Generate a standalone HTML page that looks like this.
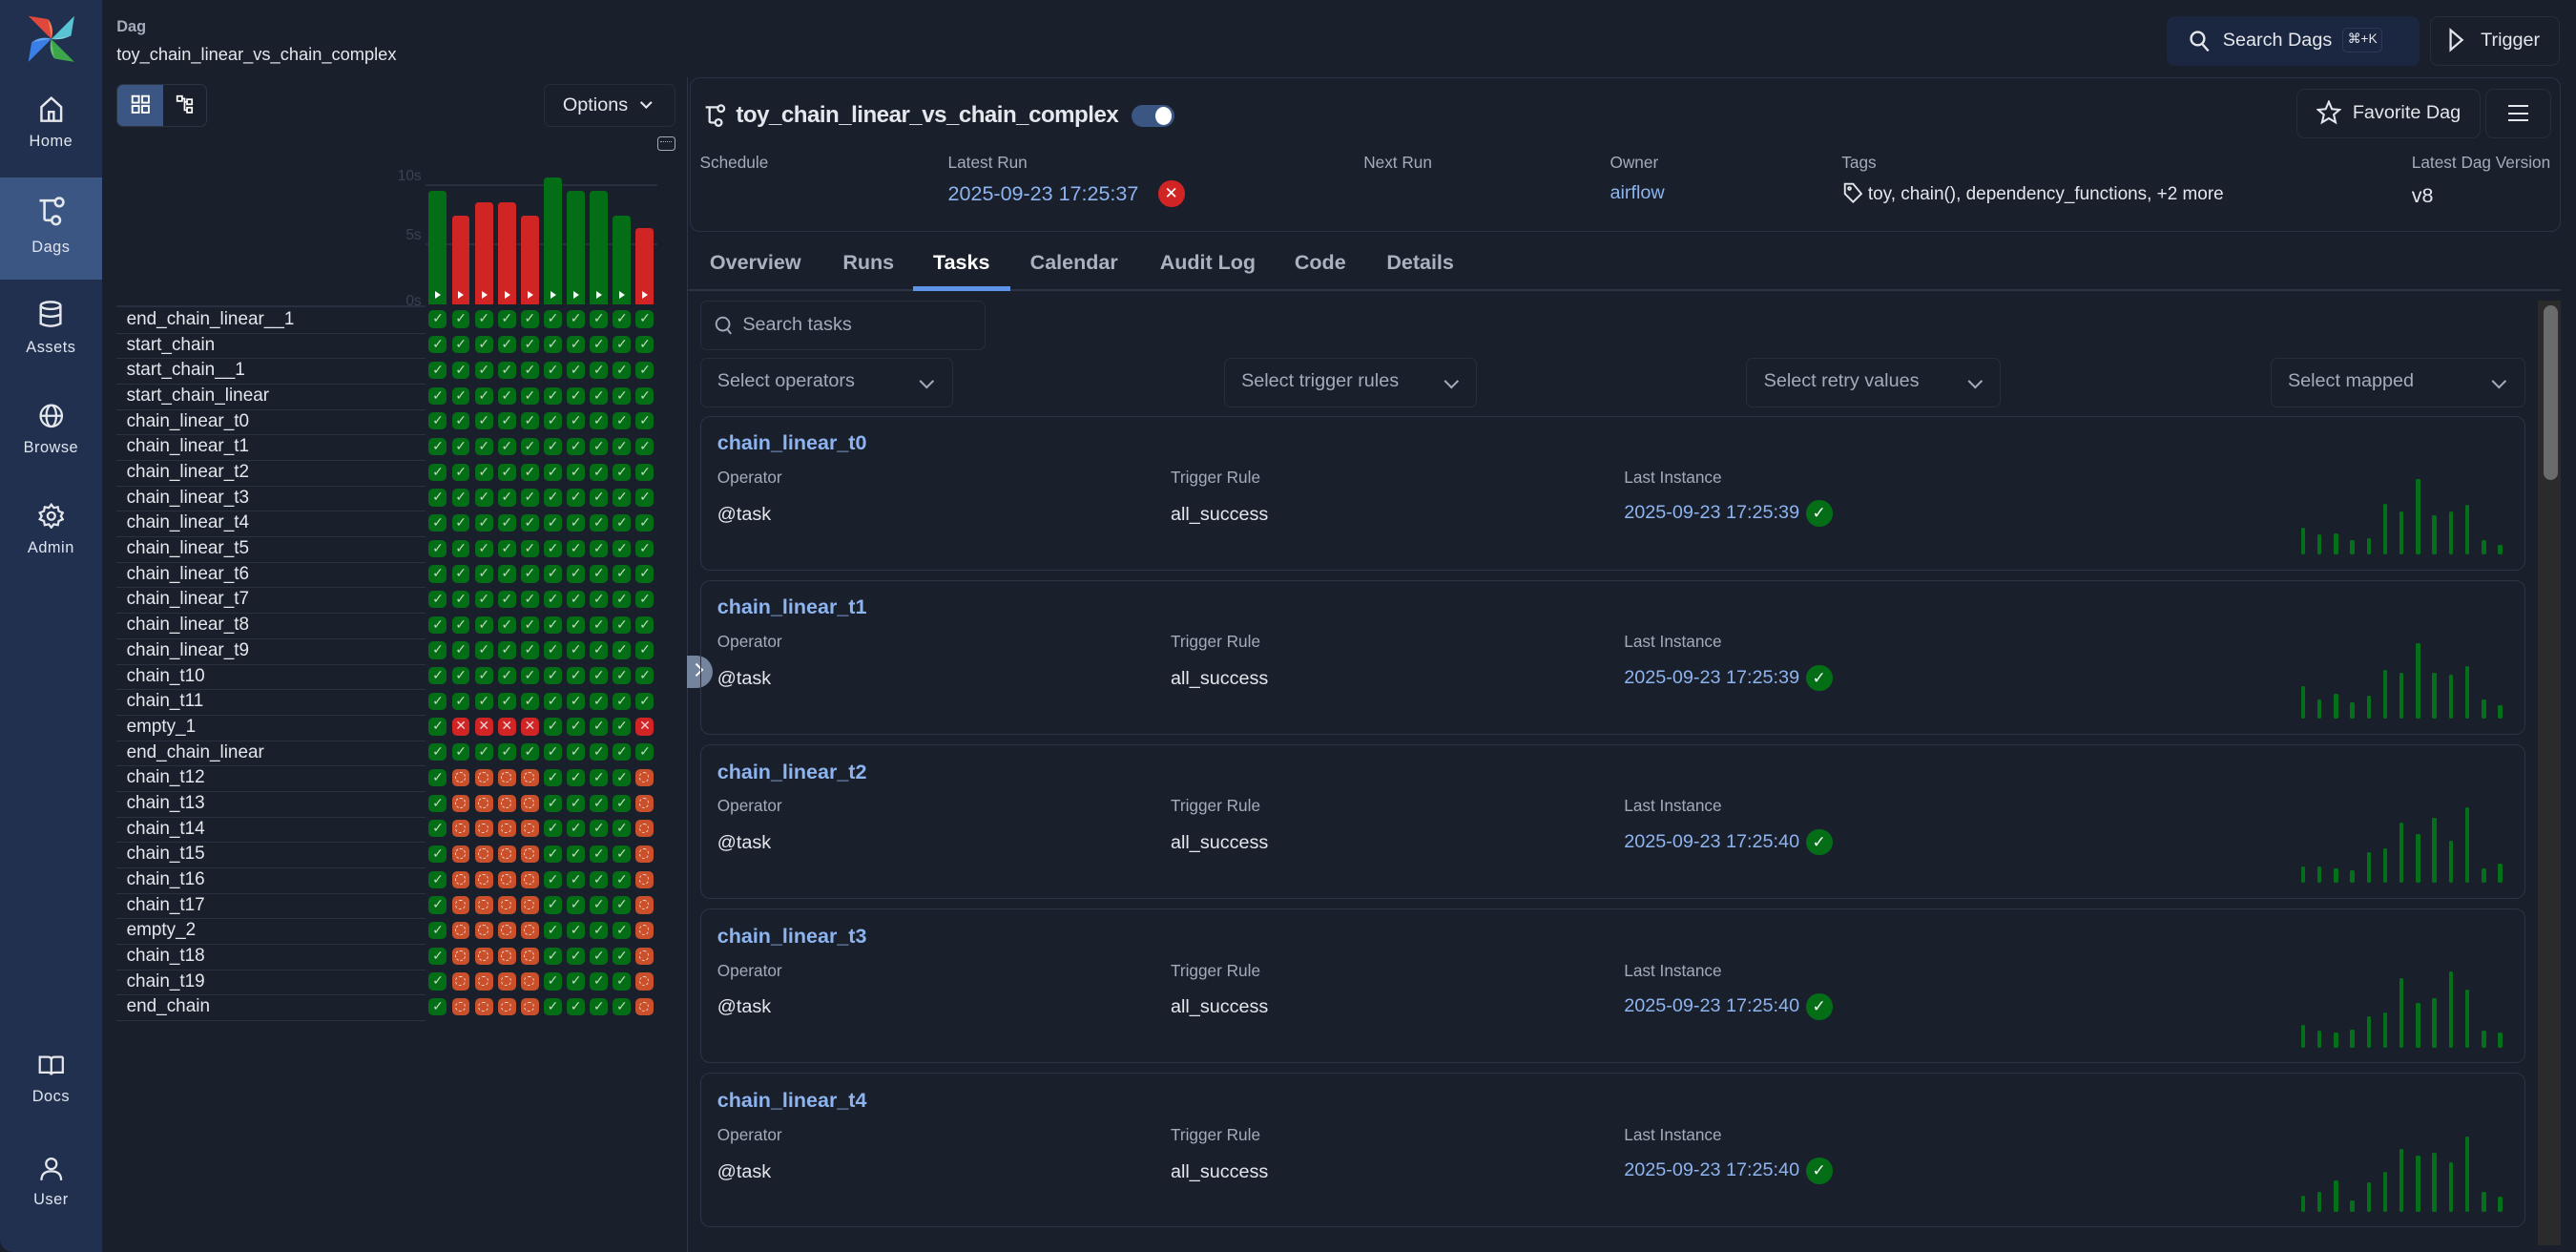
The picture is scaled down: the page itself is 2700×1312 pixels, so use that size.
<!DOCTYPE html>
<html><head><meta charset="utf-8">
<style>
*{box-sizing:border-box;margin:0;padding:0}
html,body{width:2700px;height:1312px;overflow:hidden;background:#1a1f2c}
#w{position:relative;width:1568px;height:762px;zoom:1.72194;background:#1a1f2c;font-family:"Liberation Sans",sans-serif;color:#e4e7ec;overflow:hidden}
.a{position:absolute}
.side{left:0;top:0;width:62px;height:762px;background:#22304f;border-radius:0 0 0 8px}
.nav{position:absolute;left:0;width:62px;text-align:center;font-size:9.5px;color:#dfe5ef;letter-spacing:.3px}
.nav svg{display:block;margin:0 auto 6px}
.lbl{font-size:10px;color:#a3acba}
.row{position:absolute;left:71px;width:188px;height:15.5px;border-bottom:1px solid #2a3141;font-size:11px;padding-left:6px;line-height:14px;color:#e4e7ec}
.cells{position:absolute;left:261px;height:11px}
.cells span{position:absolute;top:0;width:11px;height:10.6px;border-radius:3px;font-size:8px;line-height:10.6px;text-align:center;color:#b8dcb9}
.g{background:#046e16}
.r{background:#d12424}
.o{background:#c9502a}
.g::after{content:"✓"}
.r::after{content:"✕";color:#f5d0d0}
.o::after{content:"";position:absolute;left:2px;top:2px;width:5px;height:5px;border:1px dashed #f3d0c4;border-radius:50%}
.bar{position:absolute;width:11px;bottom:0;border-radius:2px 2px 0 0}
.bar::after{content:"";position:absolute;left:4px;bottom:3px;border-left:4px solid #fff;border-top:2.5px solid transparent;border-bottom:2.5px solid transparent}
.box{position:absolute;border:1px solid #2c3445;border-radius:6px}
.sel{position:absolute;top:218px;height:30px;border:1px solid #262e3d;border-radius:4px;font-size:11.5px;color:#a3acba;padding:7px 10px}
.sel::after{content:"";position:absolute;right:12px;top:10px;width:5px;height:5px;border-right:1.3px solid #a3acba;border-bottom:1.3px solid #a3acba;transform:rotate(45deg)}
.card{position:absolute;left:426px;width:1111px;height:94px;border:1px solid #2c3445;border-radius:6px}
.card .t{position:absolute;left:10px;top:9px;font-size:12.5px;font-weight:bold;color:#8db4ef}
.card .l{position:absolute;top:31px;font-size:10px;color:#a3acba}
.card .v{position:absolute;top:53px;font-size:11.5px}
.ok{display:inline-block;width:16px;height:16px;border-radius:50%;background:#046e16;color:#fff;font-size:10px;text-align:center;line-height:16px;vertical-align:middle;margin-left:4px}
.sp{position:absolute;left:974px;bottom:9px;height:50px;width:130px}
.sp i{position:absolute;bottom:0;width:2.6px;background:#05701a;border-radius:1px}
.tab{position:absolute;top:153px;font-size:12.5px;color:#aab2c0;font-weight:bold}
</style></head><body><div id="w">

<div class="a side"></div>
<svg class="a" style="left:16px;top:9px" width="30" height="30" viewBox="0 0 30 30">
<path d="M15 15 L1 1 L13 3 Z" fill="#e1473a"/><path d="M15 15 L13 3 Q17 8 15 15" fill="#f47d59"/>
<path d="M15 15 L29 1 L27 13 Z" fill="#57c5d2"/><path d="M15 15 L27 13 Q21 16 15 15" fill="#7fd8e2"/>
<path d="M15 15 L29 29 L17 27 Z" fill="#3da64a"/><path d="M15 15 L17 27 Q13 22 15 15" fill="#5dc46a"/>
<path d="M15 15 L1 29 L3 17 Z" fill="#3a7ee8"/><path d="M15 15 L3 17 Q9 13 15 15" fill="#62a8f4"/>
</svg>
<div class="a" style="left:0;top:108px;width:62px;height:62px;background:#3c5684"></div>
<div class="nav" style="top:58px"><svg width="16" height="17" viewBox="0 0 16 17" fill="none" stroke="#e4e7ec" stroke-width="1.4"><path d="M2 7 L8 1.5 L14 7 V15.5 H2 Z"/><path d="M6.5 15.5 V10 H9.5 V15.5"/></svg>Home</div>
<div class="nav" style="top:119px"><svg width="18" height="20" viewBox="0 0 18 20" fill="none" stroke="#e4e7ec" stroke-width="1.5"><path d="M2 3 H12 M5 3 V14 Q5 15 7 15 H9"/><circle cx="14" cy="4" r="2.5"/><circle cx="12" cy="15" r="2.5"/></svg>Dags</div>
<div class="nav" style="top:183px"><svg width="14" height="17" viewBox="0 0 14 17" fill="none" stroke="#e4e7ec" stroke-width="1.4"><ellipse cx="7" cy="3" rx="6" ry="2.2"/><path d="M1 3 V14 Q7 17 13 14 V3 M1 8.5 Q7 11 13 8.5"/></svg>Assets</div>
<div class="nav" style="top:245px"><svg width="16" height="16" viewBox="0 0 16 16" fill="none" stroke="#e4e7ec" stroke-width="1.3"><circle cx="8" cy="8" r="6.5"/><ellipse cx="8" cy="8" rx="3" ry="6.5"/><path d="M1.5 8 H14.5"/></svg>Browse</div>
<div class="nav" style="top:306px"><svg width="16" height="16" viewBox="0 0 16 16" fill="none" stroke="#e4e7ec" stroke-width="1.3"><path d="M8 1 L9.5 3 L12 2.5 L12.5 5 L15 6 L13.8 8 L15 10 L12.5 11 L12 13.5 L9.5 13 L8 15 L6.5 13 L4 13.5 L3.5 11 L1 10 L2.2 8 L1 6 L3.5 5 L4 2.5 L6.5 3 Z"/><circle cx="8" cy="8" r="2.3"/></svg>Admin</div>
<div class="nav" style="top:642px"><svg width="16" height="14" viewBox="0 0 16 14" fill="none" stroke="#e4e7ec" stroke-width="1.3"><path d="M1 1.5 H6 Q8 1.5 8 3.5 V12.5 Q8 11 6 11 H1 Z M15 1.5 H10 Q8 1.5 8 3.5 M8 12.5 Q8 11 10 11 H15 V1.5"/></svg>Docs</div>
<div class="nav" style="top:703px"><svg width="16" height="16" viewBox="0 0 16 16" fill="none" stroke="#e4e7ec" stroke-width="1.3"><circle cx="8" cy="5" r="3.2"/><path d="M2 15 Q2 9.5 8 9.5 Q14 9.5 14 15"/></svg>User</div>

<div class="a" style="left:71px;top:11px;font-size:9.5px;font-weight:bold;color:#a3acba">Dag</div>
<div class="a" style="left:71px;top:27px;font-size:10.6px">toy_chain_linear_vs_chain_complex</div>
<div class="a" style="left:71px;top:51px;width:55px;height:26px;border:1px solid #2c3445;border-radius:4px;overflow:hidden">
 <div class="a" style="left:0;top:0;width:28px;height:26px;background:#3c5684"></div>
 <svg class="a" style="left:8px;top:6px" width="12" height="12" viewBox="0 0 12 12" fill="none" stroke="#fff" stroke-width="1.1"><rect x="1" y="1" width="4" height="4"/><rect x="7" y="1" width="4" height="4"/><rect x="1" y="7" width="4" height="4"/><rect x="7" y="7" width="4" height="4"/></svg>
 <svg class="a" style="left:35px;top:6px" width="12" height="12" viewBox="0 0 12 12" fill="none" stroke="#fff" stroke-width="1"><rect x="1" y="1" width="3" height="3"/><rect x="7" y="3" width="3" height="3"/><rect x="7" y="8" width="3" height="3"/><path d="M4 2.5 H5.5 V9.5 H7 M5.5 4.5 H7"/></svg>
</div>
<div class="a" style="left:331px;top:51px;width:80px;height:26px;border:1px solid #262e3d;border-radius:4px;font-size:11.5px;padding:6px 0 0 11px">Options</div>
<div class="a" style="left:391px;top:60px;width:5px;height:5px;border-right:1.2px solid #e4e7ec;border-bottom:1.2px solid #e4e7ec;transform:rotate(45deg)"></div>
<div class="a" style="left:400px;top:83px;width:11px;height:9px;border:1px solid #a3acba;border-radius:2px"></div>
<div class="a" style="left:402px;top:86px;width:7px;height:1px;border-top:1px dotted #a3acba"></div>
<div class="a" style="left:242px;top:102px;font-size:9px;color:#3a4253">10s</div>
<div class="a" style="left:247px;top:138px;font-size:9px;color:#3a4253">5s</div>
<div class="a" style="left:247px;top:178px;font-size:9px;color:#3a4253">0s</div>
<div class="a" style="left:259px;top:112px;width:141px;height:1px;background:#283040"></div>
<div class="a" style="left:259px;top:148px;width:141px;height:1px;background:#283040"></div>
<div class="a" style="left:71px;top:186px;width:188px;height:1px;background:#283040"></div>
<div class="a" style="left:261px;top:0;width:140px;height:185px">
<div class="bar g" style="left:0;height:69px"></div>
<div class="bar r" style="left:14px;height:54px"></div>
<div class="bar r" style="left:28px;height:62px"></div>
<div class="bar r" style="left:42px;height:62px"></div>
<div class="bar r" style="left:56px;height:54px"></div>
<div class="bar g" style="left:70px;height:77px"></div>
<div class="bar g" style="left:84px;height:69px"></div>
<div class="bar g" style="left:98px;height:69px"></div>
<div class="bar g" style="left:112px;height:54px"></div>
<div class="bar r" style="left:126px;height:46px"></div>
</div>
<style>.cells span:nth-child(1){left:0}.cells span:nth-child(2){left:14px}.cells span:nth-child(3){left:28px}.cells span:nth-child(4){left:42px}.cells span:nth-child(5){left:56px}.cells span:nth-child(6){left:70px}.cells span:nth-child(7){left:84px}.cells span:nth-child(8){left:98px}.cells span:nth-child(9){left:112px}.cells span:nth-child(10){left:126px}</style>

<div class="row" style="top:187.5px">end_chain_linear__1</div>
<div class="row" style="top:203px">start_chain</div>
<div class="row" style="top:218.5px">start_chain__1</div>
<div class="row" style="top:234px">start_chain_linear</div>
<div class="row" style="top:249.5px">chain_linear_t0</div>
<div class="row" style="top:265px">chain_linear_t1</div>
<div class="row" style="top:280.5px">chain_linear_t2</div>
<div class="row" style="top:296px">chain_linear_t3</div>
<div class="row" style="top:311.5px">chain_linear_t4</div>
<div class="row" style="top:327px">chain_linear_t5</div>
<div class="row" style="top:342.5px">chain_linear_t6</div>
<div class="row" style="top:358px">chain_linear_t7</div>
<div class="row" style="top:373.5px">chain_linear_t8</div>
<div class="row" style="top:389px">chain_linear_t9</div>
<div class="row" style="top:404.5px">chain_t10</div>
<div class="row" style="top:420px">chain_t11</div>
<div class="row" style="top:435.5px">empty_1</div>
<div class="row" style="top:451px">end_chain_linear</div>
<div class="row" style="top:466.5px">chain_t12</div>
<div class="row" style="top:482px">chain_t13</div>
<div class="row" style="top:497.5px">chain_t14</div>
<div class="row" style="top:513px">chain_t15</div>
<div class="row" style="top:528.5px">chain_t16</div>
<div class="row" style="top:544px">chain_t17</div>
<div class="row" style="top:559.5px">empty_2</div>
<div class="row" style="top:575px">chain_t18</div>
<div class="row" style="top:590.5px">chain_t19</div>
<div class="row" style="top:606px">end_chain</div>

<div class="cells" style="top:189px"><span class="g"></span><span class="g"></span><span class="g"></span><span class="g"></span><span class="g"></span><span class="g"></span><span class="g"></span><span class="g"></span><span class="g"></span><span class="g"></span></div>
<div class="cells" style="top:204.5px"><span class="g"></span><span class="g"></span><span class="g"></span><span class="g"></span><span class="g"></span><span class="g"></span><span class="g"></span><span class="g"></span><span class="g"></span><span class="g"></span></div>
<div class="cells" style="top:220px"><span class="g"></span><span class="g"></span><span class="g"></span><span class="g"></span><span class="g"></span><span class="g"></span><span class="g"></span><span class="g"></span><span class="g"></span><span class="g"></span></div>
<div class="cells" style="top:235.5px"><span class="g"></span><span class="g"></span><span class="g"></span><span class="g"></span><span class="g"></span><span class="g"></span><span class="g"></span><span class="g"></span><span class="g"></span><span class="g"></span></div>
<div class="cells" style="top:251px"><span class="g"></span><span class="g"></span><span class="g"></span><span class="g"></span><span class="g"></span><span class="g"></span><span class="g"></span><span class="g"></span><span class="g"></span><span class="g"></span></div>
<div class="cells" style="top:266.5px"><span class="g"></span><span class="g"></span><span class="g"></span><span class="g"></span><span class="g"></span><span class="g"></span><span class="g"></span><span class="g"></span><span class="g"></span><span class="g"></span></div>
<div class="cells" style="top:282px"><span class="g"></span><span class="g"></span><span class="g"></span><span class="g"></span><span class="g"></span><span class="g"></span><span class="g"></span><span class="g"></span><span class="g"></span><span class="g"></span></div>
<div class="cells" style="top:297.5px"><span class="g"></span><span class="g"></span><span class="g"></span><span class="g"></span><span class="g"></span><span class="g"></span><span class="g"></span><span class="g"></span><span class="g"></span><span class="g"></span></div>
<div class="cells" style="top:313px"><span class="g"></span><span class="g"></span><span class="g"></span><span class="g"></span><span class="g"></span><span class="g"></span><span class="g"></span><span class="g"></span><span class="g"></span><span class="g"></span></div>
<div class="cells" style="top:328.5px"><span class="g"></span><span class="g"></span><span class="g"></span><span class="g"></span><span class="g"></span><span class="g"></span><span class="g"></span><span class="g"></span><span class="g"></span><span class="g"></span></div>
<div class="cells" style="top:344px"><span class="g"></span><span class="g"></span><span class="g"></span><span class="g"></span><span class="g"></span><span class="g"></span><span class="g"></span><span class="g"></span><span class="g"></span><span class="g"></span></div>
<div class="cells" style="top:359.5px"><span class="g"></span><span class="g"></span><span class="g"></span><span class="g"></span><span class="g"></span><span class="g"></span><span class="g"></span><span class="g"></span><span class="g"></span><span class="g"></span></div>
<div class="cells" style="top:375px"><span class="g"></span><span class="g"></span><span class="g"></span><span class="g"></span><span class="g"></span><span class="g"></span><span class="g"></span><span class="g"></span><span class="g"></span><span class="g"></span></div>
<div class="cells" style="top:390.5px"><span class="g"></span><span class="g"></span><span class="g"></span><span class="g"></span><span class="g"></span><span class="g"></span><span class="g"></span><span class="g"></span><span class="g"></span><span class="g"></span></div>
<div class="cells" style="top:406px"><span class="g"></span><span class="g"></span><span class="g"></span><span class="g"></span><span class="g"></span><span class="g"></span><span class="g"></span><span class="g"></span><span class="g"></span><span class="g"></span></div>
<div class="cells" style="top:421.5px"><span class="g"></span><span class="g"></span><span class="g"></span><span class="g"></span><span class="g"></span><span class="g"></span><span class="g"></span><span class="g"></span><span class="g"></span><span class="g"></span></div>
<div class="cells" style="top:437px"><span class="g"></span><span class="r"></span><span class="r"></span><span class="r"></span><span class="r"></span><span class="g"></span><span class="g"></span><span class="g"></span><span class="g"></span><span class="r"></span></div>
<div class="cells" style="top:452.5px"><span class="g"></span><span class="g"></span><span class="g"></span><span class="g"></span><span class="g"></span><span class="g"></span><span class="g"></span><span class="g"></span><span class="g"></span><span class="g"></span></div>
<div class="cells" style="top:468px"><span class="g"></span><span class="o"></span><span class="o"></span><span class="o"></span><span class="o"></span><span class="g"></span><span class="g"></span><span class="g"></span><span class="g"></span><span class="o"></span></div>
<div class="cells" style="top:483.5px"><span class="g"></span><span class="o"></span><span class="o"></span><span class="o"></span><span class="o"></span><span class="g"></span><span class="g"></span><span class="g"></span><span class="g"></span><span class="o"></span></div>
<div class="cells" style="top:499px"><span class="g"></span><span class="o"></span><span class="o"></span><span class="o"></span><span class="o"></span><span class="g"></span><span class="g"></span><span class="g"></span><span class="g"></span><span class="o"></span></div>
<div class="cells" style="top:514.5px"><span class="g"></span><span class="o"></span><span class="o"></span><span class="o"></span><span class="o"></span><span class="g"></span><span class="g"></span><span class="g"></span><span class="g"></span><span class="o"></span></div>
<div class="cells" style="top:530px"><span class="g"></span><span class="o"></span><span class="o"></span><span class="o"></span><span class="o"></span><span class="g"></span><span class="g"></span><span class="g"></span><span class="g"></span><span class="o"></span></div>
<div class="cells" style="top:545.5px"><span class="g"></span><span class="o"></span><span class="o"></span><span class="o"></span><span class="o"></span><span class="g"></span><span class="g"></span><span class="g"></span><span class="g"></span><span class="o"></span></div>
<div class="cells" style="top:561px"><span class="g"></span><span class="o"></span><span class="o"></span><span class="o"></span><span class="o"></span><span class="g"></span><span class="g"></span><span class="g"></span><span class="g"></span><span class="o"></span></div>
<div class="cells" style="top:576.5px"><span class="g"></span><span class="o"></span><span class="o"></span><span class="o"></span><span class="o"></span><span class="g"></span><span class="g"></span><span class="g"></span><span class="g"></span><span class="o"></span></div>
<div class="cells" style="top:592px"><span class="g"></span><span class="o"></span><span class="o"></span><span class="o"></span><span class="o"></span><span class="g"></span><span class="g"></span><span class="g"></span><span class="g"></span><span class="o"></span></div>
<div class="cells" style="top:607.5px"><span class="g"></span><span class="o"></span><span class="o"></span><span class="o"></span><span class="o"></span><span class="g"></span><span class="g"></span><span class="g"></span><span class="g"></span><span class="o"></span></div>

<div class="a" style="left:418px;top:47px;width:1px;height:715px;background:#2c3445"></div>
<div class="a" style="left:418px;top:399px;width:16px;height:20px;background:#74849c;border-radius:0 10px 10px 0"></div>
<div class="a" style="left:421px;top:405px;width:6px;height:6px;border-right:1.6px solid #fff;border-top:1.6px solid #fff;transform:rotate(45deg)"></div>

<div class="a" style="left:1319px;top:10px;width:154px;height:30px;background:#1b2640;border-radius:5px"></div>
<svg class="a" style="left:1332px;top:18px" width="13" height="14" viewBox="0 0 13 14" fill="none" stroke="#e4e7ec" stroke-width="1.4"><circle cx="5.5" cy="5.5" r="4"/><path d="M8.5 9 L12 13"/></svg>
<div class="a" style="left:1353px;top:18px;font-size:11.5px">Search Dags</div>
<div class="a" style="left:1426px;top:17px;width:24px;height:15px;border:1px solid #2c3a58;border-radius:3px;font-size:8px;text-align:center;line-height:13px">⌘+K</div>
<div class="a" style="left:1479px;top:10px;width:79px;height:30px;border:1px solid #262e3d;border-radius:5px"></div>
<svg class="a" style="left:1490px;top:17px" width="10" height="15" viewBox="0 0 10 15" fill="none" stroke="#e4e7ec" stroke-width="1.3"><path d="M1.5 1.5 L8.5 7.5 L1.5 13.5 Z"/></svg>
<div class="a" style="left:1510px;top:18px;font-size:11.5px">Trigger</div>

<div class="box" style="left:420px;top:47px;width:1139px;height:94px;border-color:#2a3345"></div>
<svg class="a" style="left:428px;top:63px" width="14" height="16" viewBox="0 0 18 20" fill="none" stroke="#e4e7ec" stroke-width="1.7"><path d="M2 3 H12 M5 3 V14 Q5 15 7 15 H9"/><circle cx="14" cy="4" r="2.5"/><circle cx="12" cy="15" r="2.5"/></svg>
<div class="a" style="left:448px;top:62px;font-size:14px;font-weight:bold;letter-spacing:-.3px">toy_chain_linear_vs_chain_complex</div>
<div class="a" style="left:689px;top:64px;width:26px;height:13px;border-radius:7px;background:#3c5684"></div>
<div class="a" style="left:703px;top:65px;width:10px;height:11px;border-radius:50%;background:#fff"></div>
<div class="a" style="left:1398px;top:54px;width:112px;height:30px;border:1px solid #262e3d;border-radius:5px"></div>
<svg class="a" style="left:1410px;top:61px" width="15" height="15" viewBox="0 0 15 15" fill="none" stroke="#e4e7ec" stroke-width="1.2"><path d="M7.5 1 L9.4 5.4 L14 5.8 L10.5 8.8 L11.6 13.5 L7.5 11 L3.4 13.5 L4.5 8.8 L1 5.8 L5.6 5.4 Z"/></svg>
<div class="a" style="left:1432px;top:62px;font-size:11.5px">Favorite Dag</div>
<div class="a" style="left:1513px;top:54px;width:40px;height:30px;border:1px solid #262e3d;border-radius:5px"></div>
<div class="a" style="left:1527px;top:64px;width:12px;height:10px;border-top:1.4px solid #e4e7ec;border-bottom:1.4px solid #e4e7ec"></div>
<div class="a" style="left:1527px;top:68.5px;width:12px;height:1.4px;background:#e4e7ec"></div>
<div class="a lbl" style="left:426px;top:93px">Schedule</div>
<div class="a lbl" style="left:577px;top:93px">Latest Run</div>
<div class="a lbl" style="left:830px;top:93px">Next Run</div>
<div class="a lbl" style="left:980px;top:93px">Owner</div>
<div class="a lbl" style="left:1121px;top:93px">Tags</div>
<div class="a lbl" style="left:1468px;top:93px">Latest Dag Version</div>
<div class="a" style="left:577px;top:111px;font-size:12.5px;color:#8db4ef">2025-09-23 17:25:37</div>
<div class="a" style="left:705px;top:110px;width:16px;height:16px;border-radius:50%;background:#d12424;color:#fff;font-size:10px;text-align:center;line-height:16px">✕</div>
<div class="a" style="left:980px;top:111px;font-size:11.5px;color:#8db4ef">airflow</div>
<svg class="a" style="left:1122px;top:111px" width="12" height="13" viewBox="0 0 12 13" fill="none" stroke="#e4e7ec" stroke-width="1.1"><path d="M1 1 H6 L11 7 L6 12 L1 7 Z"/><circle cx="3.8" cy="3.8" r=".8"/></svg>
<div class="a" style="left:1137px;top:112px;font-size:11px">toy, chain(), dependency_functions, +2 more</div>
<div class="a" style="left:1468px;top:112px;font-size:12.5px">v8</div>

<div class="tab" style="left:432px">Overview</div>
<div class="tab" style="left:513px">Runs</div>
<div class="tab" style="left:568px;color:#fff">Tasks</div>
<div class="tab" style="left:627px">Calendar</div>
<div class="tab" style="left:706px">Audit Log</div>
<div class="tab" style="left:788px">Code</div>
<div class="tab" style="left:844px">Details</div>
<div class="a" style="left:419px;top:176px;width:1140px;height:1px;background:#2c3445"></div>
<div class="a" style="left:556px;top:174px;width:59px;height:3px;background:#5f95e8"></div>

<div class="a" style="left:426px;top:183px;width:174px;height:30px;border:1px solid #262e3d;border-radius:4px"></div>
<svg class="a" style="left:435px;top:192px" width="11" height="12" viewBox="0 0 11 12" fill="none" stroke="#a3acba" stroke-width="1.1"><circle cx="5" cy="5" r="4"/><path d="M8 8.5 L10 11"/></svg>
<div class="a" style="left:452px;top:191px;font-size:11.5px;color:#a3acba">Search tasks</div>
<div class="sel" style="left:426px;width:154px">Select operators</div>
<div class="sel" style="left:745px;width:154px">Select trigger rules</div>
<div class="sel" style="left:1063px;width:155px">Select retry values</div>
<div class="sel" style="left:1382px;width:155px">Select mapped</div>

<div class="a" style="left:1545px;top:183px;width:14px;height:575px;background:#2b2b2b"></div>
<div class="a" style="left:1548px;top:186px;width:9px;height:106px;background:#6b6b6b;border-radius:5px"></div>

<div class="card" style="top:253px"><div class="t">chain_linear_t0</div><div class="l" style="left:10px">Operator</div><div class="l" style="left:286px">Trigger Rule</div><div class="l" style="left:562px">Last Instance</div><div class="v" style="left:10px">@task</div><div class="v" style="left:286px">all_success</div><div class="v" style="left:562px;top:51px;color:#8db4ef">2025-09-23 17:25:39<span class="ok">✓</span></div>
<div class="sp"><i style="left:0;height:16px"></i><i style="left:10px;height:12px"></i><i style="left:20px;height:13px"></i><i style="left:30px;height:9px"></i><i style="left:40px;height:10px"></i><i style="left:50px;height:31px"></i><i style="left:60px;height:26px"></i><i style="left:70px;height:46px"></i><i style="left:80px;height:24px"></i><i style="left:90px;height:26px"></i><i style="left:100px;height:30px"></i><i style="left:110px;height:9px"></i><i style="left:120px;height:6px"></i></div></div>
<div class="card" style="top:353px"><div class="t">chain_linear_t1</div><div class="l" style="left:10px">Operator</div><div class="l" style="left:286px">Trigger Rule</div><div class="l" style="left:562px">Last Instance</div><div class="v" style="left:10px">@task</div><div class="v" style="left:286px">all_success</div><div class="v" style="left:562px;top:51px;color:#8db4ef">2025-09-23 17:25:39<span class="ok">✓</span></div>
<div class="sp"><i style="left:0;height:20px"></i><i style="left:10px;height:12px"></i><i style="left:20px;height:15px"></i><i style="left:30px;height:10px"></i><i style="left:40px;height:14px"></i><i style="left:50px;height:30px"></i><i style="left:60px;height:28px"></i><i style="left:70px;height:46px"></i><i style="left:80px;height:28px"></i><i style="left:90px;height:27px"></i><i style="left:100px;height:32px"></i><i style="left:110px;height:12px"></i><i style="left:120px;height:8px"></i></div></div>
<div class="card" style="top:453px"><div class="t">chain_linear_t2</div><div class="l" style="left:10px">Operator</div><div class="l" style="left:286px">Trigger Rule</div><div class="l" style="left:562px">Last Instance</div><div class="v" style="left:10px">@task</div><div class="v" style="left:286px">all_success</div><div class="v" style="left:562px;top:51px;color:#8db4ef">2025-09-23 17:25:40<span class="ok">✓</span></div>
<div class="sp"><i style="left:0;height:10px"></i><i style="left:10px;height:10px"></i><i style="left:20px;height:9px"></i><i style="left:30px;height:8px"></i><i style="left:40px;height:19px"></i><i style="left:50px;height:21px"></i><i style="left:60px;height:37px"></i><i style="left:70px;height:30px"></i><i style="left:80px;height:40px"></i><i style="left:90px;height:26px"></i><i style="left:100px;height:46px"></i><i style="left:110px;height:9px"></i><i style="left:120px;height:12px"></i></div></div>
<div class="card" style="top:553px"><div class="t">chain_linear_t3</div><div class="l" style="left:10px">Operator</div><div class="l" style="left:286px">Trigger Rule</div><div class="l" style="left:562px">Last Instance</div><div class="v" style="left:10px">@task</div><div class="v" style="left:286px">all_success</div><div class="v" style="left:562px;top:51px;color:#8db4ef">2025-09-23 17:25:40<span class="ok">✓</span></div>
<div class="sp"><i style="left:0;height:14px"></i><i style="left:10px;height:10px"></i><i style="left:20px;height:9px"></i><i style="left:30px;height:11px"></i><i style="left:40px;height:19px"></i><i style="left:50px;height:21px"></i><i style="left:60px;height:42px"></i><i style="left:70px;height:27px"></i><i style="left:80px;height:30px"></i><i style="left:90px;height:46px"></i><i style="left:100px;height:35px"></i><i style="left:110px;height:10px"></i><i style="left:120px;height:9px"></i></div></div>
<div class="card" style="top:653px"><div class="t">chain_linear_t4</div><div class="l" style="left:10px">Operator</div><div class="l" style="left:286px">Trigger Rule</div><div class="l" style="left:562px">Last Instance</div><div class="v" style="left:10px">@task</div><div class="v" style="left:286px">all_success</div><div class="v" style="left:562px;top:51px;color:#8db4ef">2025-09-23 17:25:40<span class="ok">✓</span></div>
<div class="sp"><i style="left:0;height:10px"></i><i style="left:10px;height:12px"></i><i style="left:20px;height:19px"></i><i style="left:30px;height:7px"></i><i style="left:40px;height:18px"></i><i style="left:50px;height:24px"></i><i style="left:60px;height:38px"></i><i style="left:70px;height:34px"></i><i style="left:80px;height:36px"></i><i style="left:90px;height:30px"></i><i style="left:100px;height:46px"></i><i style="left:110px;height:12px"></i><i style="left:120px;height:9px"></i></div></div>

</div></body></html>
